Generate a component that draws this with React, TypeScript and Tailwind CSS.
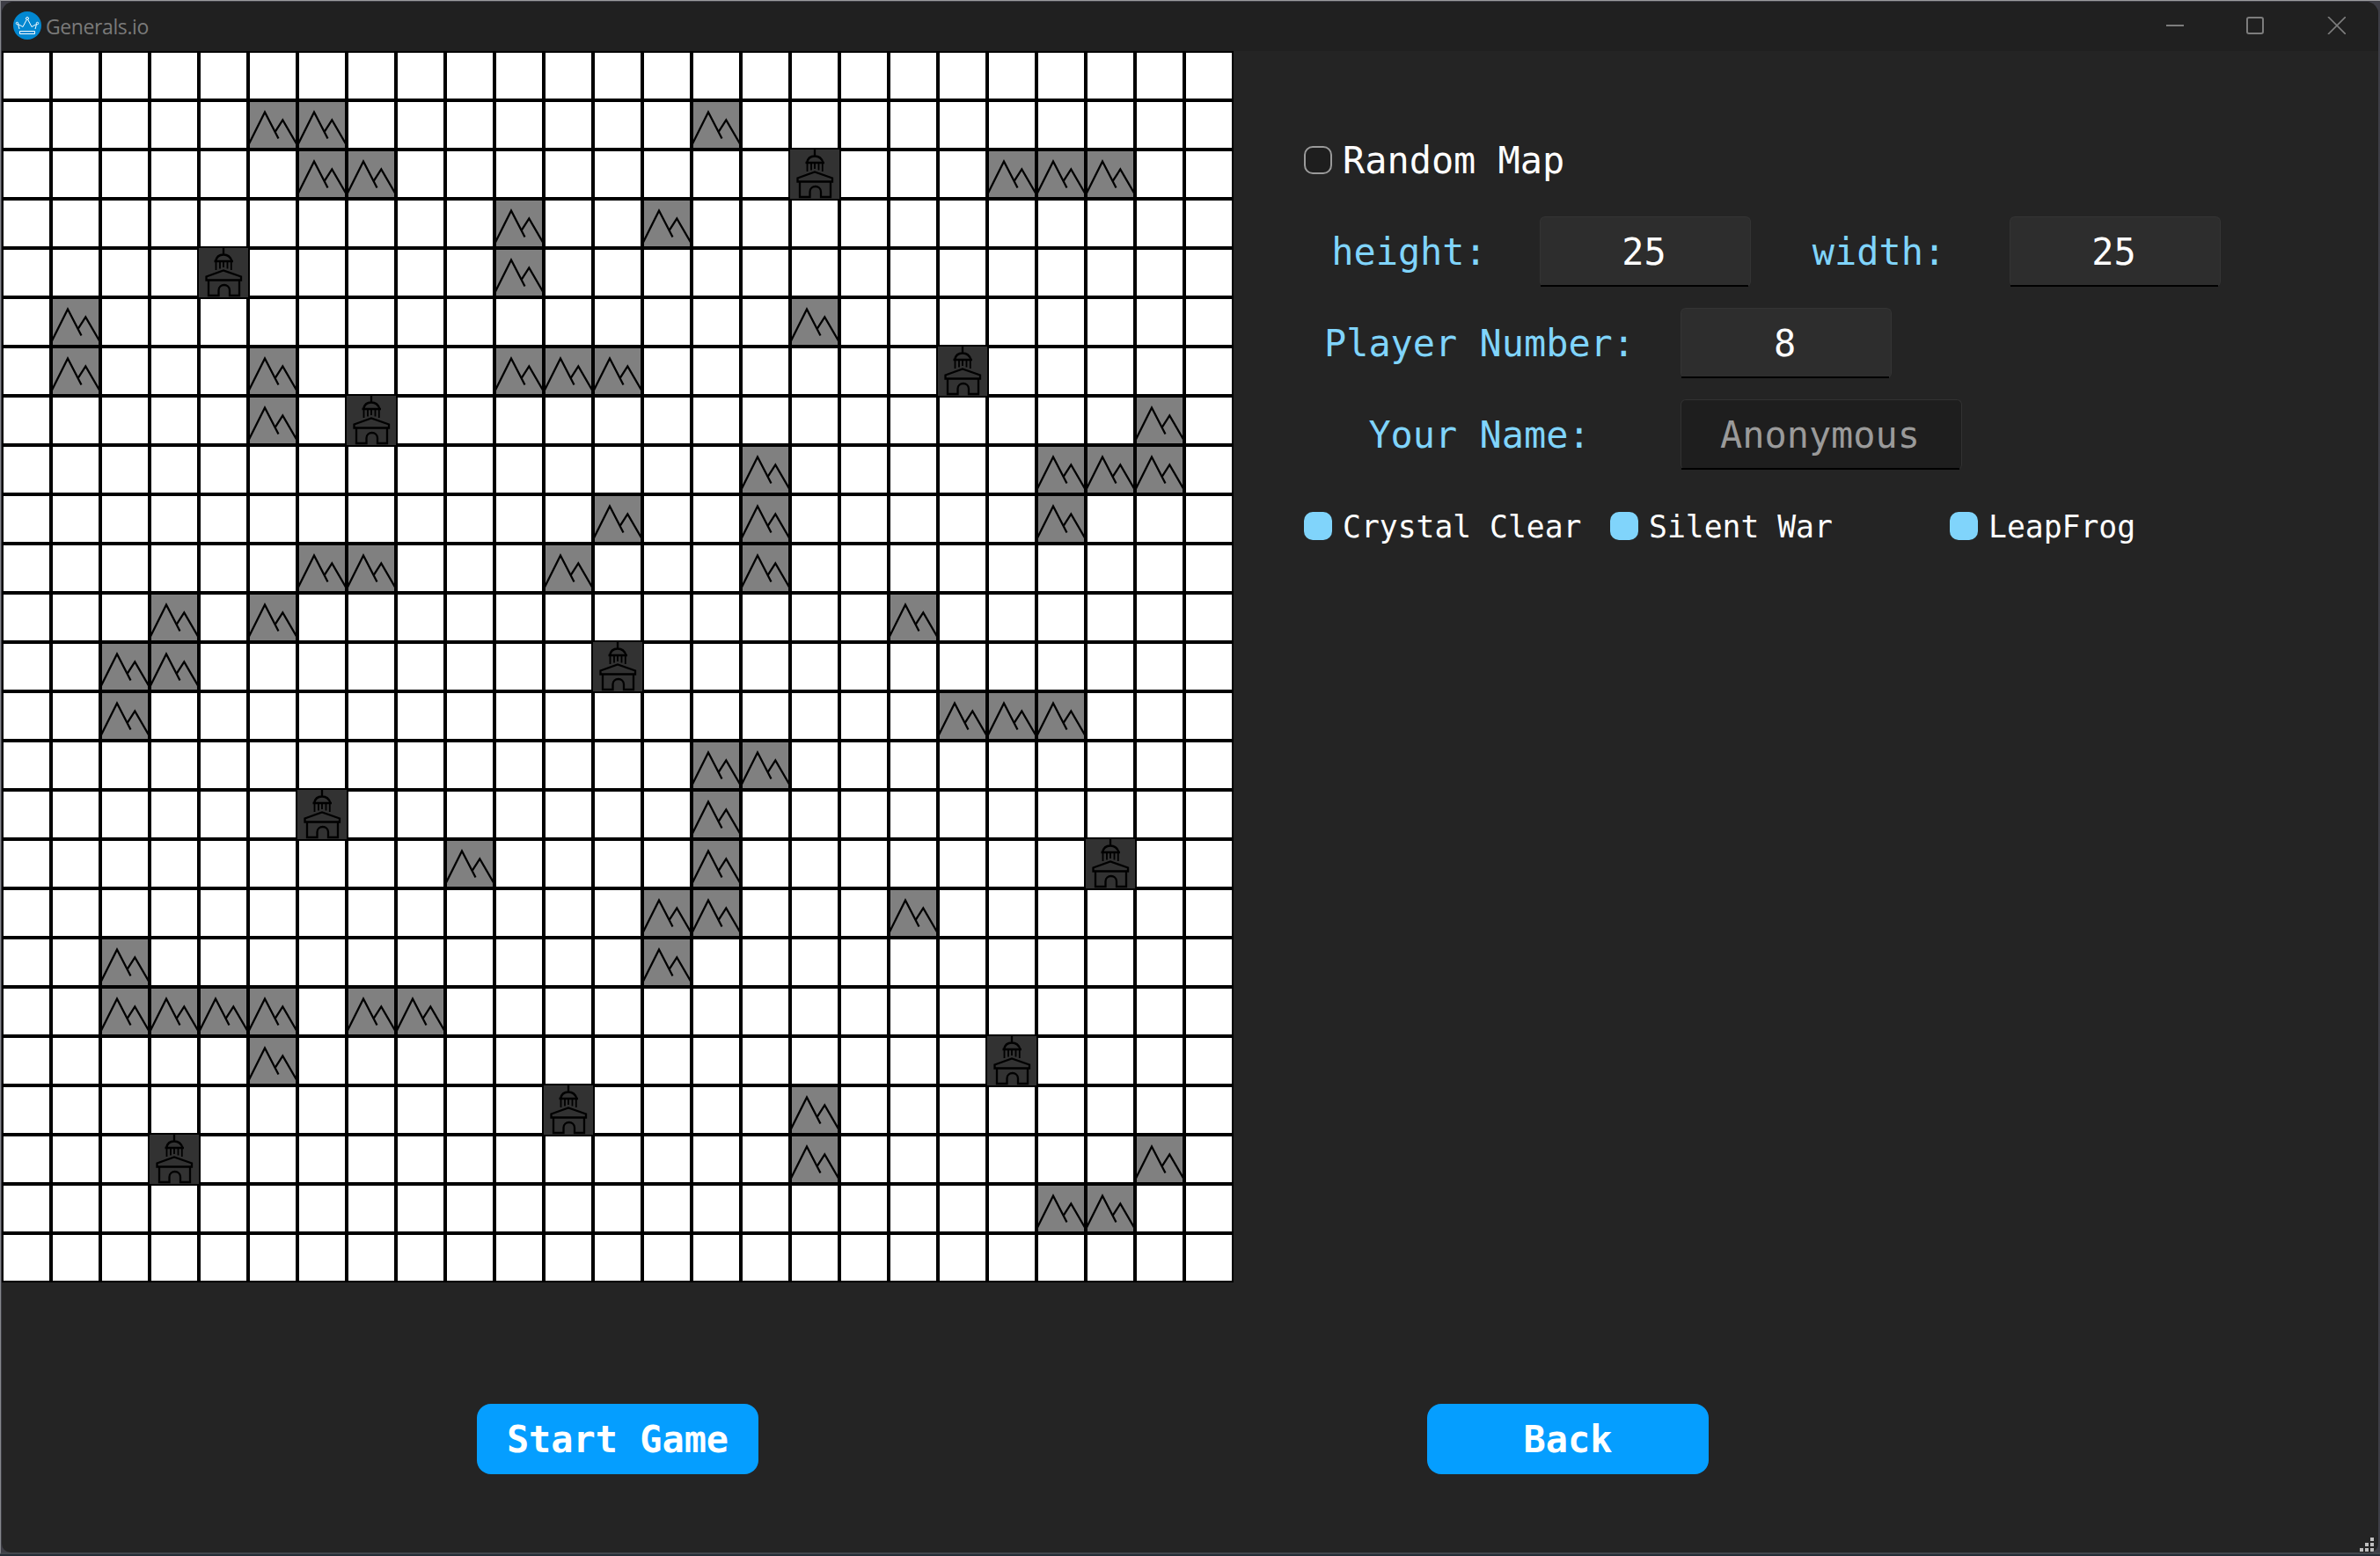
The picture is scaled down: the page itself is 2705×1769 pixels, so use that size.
import React from "react";

const SIZE = 25;

const MOUNTAINS: Record<number, number[]> = {
  1: [5, 6, 14],
  2: [6, 7, 20, 21, 22],
  3: [10, 13],
  4: [10],
  5: [1, 16],
  6: [1, 5, 10, 11, 12],
  7: [5, 23],
  8: [15, 21, 22, 23],
  9: [12, 15, 21],
  10: [6, 7, 11, 15],
  11: [3, 5, 18],
  12: [2, 3],
  13: [2, 19, 20, 21],
  14: [14, 15],
  15: [14],
  16: [9, 14],
  17: [13, 14, 18],
  18: [2, 13],
  19: [2, 3, 4, 5, 7, 8],
  20: [5],
  21: [16],
  22: [16, 23],
  23: [21, 22],
};

const CITIES: Record<number, number[]> = {
  2: [16],
  4: [4],
  6: [19],
  7: [7],
  12: [12],
  15: [6],
  16: [22],
  20: [20],
  21: [11],
  22: [3],
};

function Mountain() {
  return (
    <div className="size-14 border-2 border-black bg-[#808080]">
      <svg viewBox="0 0 52 52" className="block size-[52px]" fill="none" stroke="#000" strokeWidth="2.3">
        <path d="M-1 47.5 L17 11.5 L32.5 41.5" />
        <path d="M28.7 33.8 L37.3 20.5 L53 47.5" />
      </svg>
    </div>
  );
}

function City() {
  return (
    <div className="size-14 bg-[#323232]">
      <svg viewBox="0 0 56 56" className="block size-14" fill="none" stroke="#000" strokeWidth="2.3">
        <path d="M28 0 V8 M17.5 15 H39 M19 15 C20 10 23.5 7.5 28 7.5 C32.5 7.5 36 10 37.5 15" />
        <path strokeWidth="1.8" d="M19.5 16 V25 M24 16 V23.5 M28 16 V22 M32.500 16 V23.5 M36.8 16 V25" />
        <path d="M8.5 36.5 V32.5 L28 25.5 L48 32.5 V36.5 Z" />
        <path d="M11 37 V54 H22.5 V48 C22.5 40 35 40 35 48 V54 H46 V37" />
      </svg>
    </div>
  );
}

function Board() {
  const cells = [];
  for (let r = 0; r < SIZE; r++) {
    for (let c = 0; c < SIZE; c++) {
      const key = `${r}-${c}`;
      if (MOUNTAINS[r]?.includes(c)) cells.push(<Mountain key={key} />);
      else if (CITIES[r]?.includes(c)) cells.push(<City key={key} />);
      else cells.push(<div key={key} className="size-14 border-2 border-black bg-white" />);
    }
  }
  return <div className="grid w-[1400px] shrink-0 grid-cols-[repeat(25,56px)]">{cells}</div>;
}

function TitleBar() {
  return (
    <header className="flex h-14 items-center justify-between bg-[#202020] pl-[13px] pr-[37px]">
      <div className="flex items-center gap-[5px]">
        <svg viewBox="0 0 32 32" className="mb-[2px] size-8">
          <circle cx="16" cy="16" r="16" fill="#0288d1" />
          <g fill="none" stroke="#fff" strokeWidth="1">
            <path d="M7.500 22.500 H24.500 V25.500 H7.500 Z M7 20 L5.500 14.500 L11 17.500 L15.200 9.500 M16.800 9.500 L21 17.500 L26.500 14.500 L25 20" />
            <circle cx="16" cy="8" r="1.500" />
            <circle cx="4.500" cy="13.500" r="1.200" />
            <circle cx="27.500" cy="13.500" r="1.200" />
          </g>
        </svg>
        <span className="font-['Open_Sans'] text-[23px] leading-8 tracking-[-0.4px] text-[#7a7a7a]">Generals.io</span>
      </div>
      <svg viewBox="0 0 204 20" className="mb-[2px] h-5 w-[204px]" fill="none" stroke="#7d7d7d" strokeWidth="2">
        <path d="M0 10 H20" />
        <rect x="92" y="1" width="18" height="18" rx="2" />
        <path d="M184 0 L204 20 M204 0 L184 20" strokeWidth="1.700" />
      </svg>
    </header>
  );
}

function Check({ label, checked, big }: { label: string; checked?: boolean; big?: boolean }) {
  return (
    <div className="flex h-20 items-center">
      <span
        className={
          checked
            ? "size-8 rounded-[10px] bg-[#80d4fb]"
            : "size-8 rounded-[10px] border-2 border-[#9a9a9a] bg-[#1e1e1e]"
        }
      />
      <span
        className={
          big
            ? "ml-3 whitespace-pre pt-0.5 text-[41.900px] leading-none text-white"
            : "ml-3 whitespace-pre pt-0.5 text-[34.700px] leading-none text-white"
        }
      >
        {label}
      </span>
    </div>
  );
}

function Field({ value, wide }: { value: string; wide?: boolean }) {
  return (
    <div
      className={
        wide
          ? "flex h-20 w-80 flex-col rounded-[6px] border border-b-0 border-[#323232] bg-[#1e1e1e] text-[#9a9a9a]"
          : "flex h-20 w-60 flex-col rounded-[6px] border border-b-0 border-[#343434] bg-[#2d2d2d] text-white"
      }
    >
      <span className="flex flex-1 items-center justify-center pr-[3px] pt-0.5 text-[41.900px] leading-none">{value}</span>
      <span className="mr-0.5 h-0.5 bg-black" />
    </div>
  );
}

function Label({ children }: { children: string }) {
  return (
    <span className="flex h-20 items-center justify-center whitespace-pre pl-[3px] pt-px text-[41.900px] leading-none text-[#80d4fb]">
      {children}
    </span>
  );
}

function Settings() {
  return (
    <section className="flex flex-col gap-6 pl-20 pt-[84px]">
      <Check label="Random Map" big />
      <div className="flex">
        <div className="w-[236px]">
          <Label>height:</Label>
        </div>
        <div className="pl-8">
          <Field value="25" />
        </div>
        <div className="ml-[26px] w-[236px]">
          <Label>width:</Label>
        </div>
        <div className="pl-8">
          <Field value="25" />
        </div>
      </div>
      <div className="flex">
        <div className="w-[396px]">
          <Label>Player Number:</Label>
        </div>
        <div className="pl-8">
          <Field value="8" />
        </div>
      </div>
      <div className="flex">
        <div className="w-[396px]">
          <Label>Your Name:</Label>
        </div>
        <div className="pl-8">
          <Field value="Anonymous" wide />
        </div>
      </div>
      <div className="flex">
        <div className="w-[348px]">
          <Check label="Crystal Clear" checked />
        </div>
        <div className="w-[386px]">
          <Check label="Silent War" checked />
        </div>
        <Check label="LeapFrog" checked />
      </div>
    </section>
  );
}

function ActionButton({ children }: { children: string }) {
  return (
    <button className="flex h-20 w-80 items-center justify-center rounded-2xl bg-[#059eff] pt-px text-[41.900px] font-bold leading-none text-white">
      {children}
    </button>
  );
}

function SizeGrip() {
  return (
    <div className="absolute bottom-[1px] right-[5px] grid grid-cols-[repeat(3,4px)] gap-0.5">
      {[0, 0, 1, 0, 1, 1, 1, 1, 1].map((on, i) => (
        <span key={i} className={on ? "size-1 bg-[#bfbfbf]" : "size-1"} />
      ))}
    </div>
  );
}

export default function App() {
  return (
    <div className="h-[1769px] w-[2705px] bg-[#252d36] pb-[2px] font-['DejaVu_Sans_Mono',monospace]">
      <div className="h-[1767px] border-b-2 border-l border-t border-b-[#43474c] border-l-[#85878c] border-t-[#9c9c9e] bg-[#3d3d45] pl-px pr-0.5 pt-px">
        <div className="relative flex h-[1763px] flex-col overflow-hidden rounded-t-[14px] rounded-b-[10px] bg-[#242424]">
          <TitleBar />
          <main className="flex">
            <Board />
            <Settings />
          </main>
          <footer className="flex gap-[760px] pl-[540px] pt-[138px]">
            <ActionButton>Start Game</ActionButton>
            <ActionButton>Back</ActionButton>
          </footer>
          <SizeGrip />
        </div>
      </div>
    </div>
  );
}
